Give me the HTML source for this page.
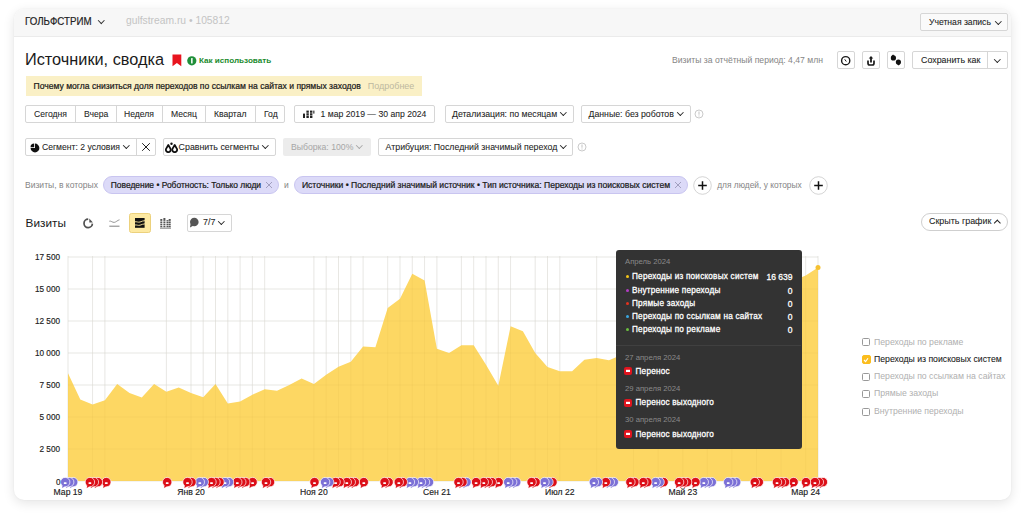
<!DOCTYPE html>
<html><head><meta charset="utf-8">
<style>
*{box-sizing:border-box;margin:0;padding:0}
html,body{width:1024px;height:517px;overflow:hidden;background:#fff}
body{font-family:"Liberation Sans",sans-serif;color:#1f1f1f;position:relative}
.a{position:absolute;white-space:nowrap}
.t{-webkit-text-stroke:0.08px currentColor}
.t2{-webkit-text-stroke:0.22px currentColor}
.card{position:absolute;left:13.5px;top:8.5px;width:997px;height:491.5px;border-radius:10px;background:#fff;
 box-shadow:0 3px 12px rgba(0,0,0,.11),0 0 2px rgba(0,0,0,.05);overflow:hidden}
.hdr{position:absolute;left:0;top:0;width:997px;height:28px;background:#f7f7f7;border-bottom:1px solid #ebebeb}
.btn{position:absolute;border:1px solid #d6d6d6;border-radius:2px;background:#fff;font-size:8.6px;line-height:16px;height:18px;white-space:nowrap;color:#222}
.chev{display:inline-block;width:5px;height:5px;border-right:1px solid #222;border-bottom:1px solid #222;transform:rotate(45deg);position:absolute}
.yl{position:absolute;left:19.5px;width:41px;text-align:right;font-size:8.2px;color:#222;line-height:12px;-webkit-text-stroke:0.15px #222}
.xl{position:absolute;top:485.5px;width:60px;text-align:center;font-size:8.6px;color:#222;line-height:12px;-webkit-text-stroke:0.15px #222}
.tt{position:absolute;left:616px;top:250px;width:186px;height:199px;background:#333333;border-radius:3px;color:#fff}
.tt .r{position:absolute;left:16px;font-size:8.2px;letter-spacing:0.22px;line-height:10px;white-space:nowrap;-webkit-text-stroke:0.28px #fff}
.tt .v{position:absolute;right:9.5px;font-size:8.5px;letter-spacing:0px;line-height:10px;text-align:right;-webkit-text-stroke:0.28px #fff}
.tt .d{position:absolute;left:9px;font-size:7.7px;color:#8a8a8a;line-height:10px;white-space:nowrap}
.dot{position:absolute;left:10px;width:3px;height:3px;border-radius:50%;margin-top:-0.5px}
.lg{position:absolute;left:862px;font-size:8.7px;line-height:11px;color:#b0b0b0;white-space:nowrap}
.lg i{position:absolute;left:0;top:1.5px;width:8px;height:8px;border:1px solid #999;border-radius:1.5px}
.lg span{position:absolute;left:12px;top:0}
</style></head><body>
<div class="card">
 <div class="hdr"></div>
</div>

<!-- header -->
<div class="a" style="left:25px;top:14.5px;font-size:11px;line-height:13px;color:#222;transform:scaleX(0.885);transform-origin:0 0;-webkit-text-stroke:0.2px #222">ГОЛЬФСТРИМ</div>
<div class="chev" style="left:98.5px;top:17.5px;width:4.5px;height:4.5px;border-width:0 0.9px 0.9px 0;border-color:#333"></div>
<div class="a" style="left:126px;top:15px;font-size:10.3px;line-height:12px;color:#c4c4c4">gulfstream.ru • 105812</div>
<div class="btn" style="left:920px;top:13px;width:88px;height:18px;background:#fafafa">
 <span class="a t" style="left:8px;top:0px;font-size:8.6px">Учетная запись</span>
 <i class="chev" style="left:75px;top:5.3px;width:4.6px;height:4.6px"></i>
</div>

<!-- title -->
<div class="a" style="left:25px;top:49px;font-size:16.3px;line-height:20px;color:#1a1a1a">Источники, сводка</div>
<svg class="a" style="left:172px;top:54px" width="10" height="13" viewBox="0 0 10 13"><path d="M0.5,0.5 H9.3 V12.3 L4.9,9 L0.5,12.3 Z" fill="#e8141e"/></svg>
<svg class="a" style="left:187px;top:56px" width="10" height="10" viewBox="0 0 10 10"><circle cx="4.8" cy="4.8" r="4.6" fill="#1f8f3a"/><rect x="4.1" y="2" width="1.5" height="5.6" fill="#fff" rx=".5"/></svg>
<div class="a" style="left:199px;top:55px;font-size:8.1px;line-height:11px;color:#198a2c;font-weight:bold">Как использовать</div>

<!-- banner -->
<div class="a" style="left:26px;top:76px;width:396px;height:19.5px;background:#faf0c6"></div>
<div class="a t2" style="left:33.6px;top:81px;font-size:8.57px;line-height:11px;color:#1a1a1a">Почему могла снизиться доля переходов по ссылкам на сайтах и прямых заходов</div>
<div class="a" style="left:367.8px;top:81px;font-size:8.97px;line-height:11px;color:#bdb8a0">Подробнее</div>

<!-- right toolbar -->
<div class="a" style="left:672px;top:55px;font-size:8.6px;line-height:11px;color:#858585">Визиты за отчётный период: 4,47 млн</div>
<div class="btn" style="left:837px;top:51px;width:18px;height:18px"></div>
<svg class="a" style="left:840px;top:55px" width="12" height="12" viewBox="0 0 12 12"><circle cx="5.7" cy="5.7" r="4.1" fill="none" stroke="#1a1a1a" stroke-width="1.4"/><path d="M4.7,4.3 L6.3,6.5" stroke="#1a1a1a" stroke-width="1"/></svg>
<div class="btn" style="left:862px;top:51px;width:18px;height:18px"></div>
<svg class="a" style="left:865px;top:55px" width="12" height="12" viewBox="0 0 12 12"><path d="M6,0.9 L3.7,3.5 H5.1 V7.4 H6.9 V3.5 H8.3 Z" fill="#1a1a1a"/><path d="M3,5.6 V8.3 Q3,10 4.7,10 H7.3 Q9,10 9,8.3 V5.6" fill="none" stroke="#1a1a1a" stroke-width="1.7"/></svg>
<div class="btn" style="left:887px;top:51px;width:18px;height:18px"></div>
<svg class="a" style="left:889px;top:53px" width="14" height="14" viewBox="0 0 14 14"><circle cx="4.4" cy="4.9" r="2.6" fill="#111"/><path d="M2.2,3.6 L4,1.6 L5.4,2.6Z" fill="#111"/><circle cx="9.4" cy="9" r="2.6" fill="#111"/><path d="M8,11.2 L9.8,12.6 L11.4,10.6Z" fill="#111"/></svg>
<div class="btn" style="left:912px;top:51px;width:96px;height:18px">
 <span class="a t" style="left:8px;top:0px;font-size:8.87px">Сохранить как</span>
 <span class="a" style="left:74px;top:0;width:1px;height:16px;background:#d6d6d6"></span>
 <i class="chev" style="left:82px;top:5.3px;width:4.6px;height:4.6px"></i>
</div>

<!-- row 1 -->
<div class="btn" style="left:25px;top:105px;width:260px;height:18px"></div>
<div class="a" style="left:75px;top:106px;width:1px;height:16px;background:#d6d6d6"></div>
<div class="a" style="left:116px;top:106px;width:1px;height:16px;background:#d6d6d6"></div>
<div class="a" style="left:162px;top:106px;width:1px;height:16px;background:#d6d6d6"></div>
<div class="a" style="left:205px;top:106px;width:1px;height:16px;background:#d6d6d6"></div>
<div class="a" style="left:255px;top:106px;width:1px;height:16px;background:#d6d6d6"></div>
<div class="a t" style="left:34px;top:109px;font-size:8.6px;line-height:11px">Сегодня</div>
<div class="a t" style="left:84px;top:109px;font-size:8.6px;line-height:11px">Вчера</div>
<div class="a t" style="left:124px;top:109px;font-size:8.6px;line-height:11px">Неделя</div>
<div class="a t" style="left:171px;top:109px;font-size:8.6px;line-height:11px">Месяц</div>
<div class="a t" style="left:214px;top:109px;font-size:8.6px;line-height:11px">Квартал</div>
<div class="a t" style="left:264px;top:109px;font-size:8.6px;line-height:11px">Год</div>

<div class="btn" style="left:294px;top:105px;width:141px;height:18px"></div>
<svg class="a" style="left:302px;top:110px" width="13" height="9" viewBox="0 0 13 9"><g fill="#222"><rect x="1" y="3.6" width="2" height="4.4"/><rect x="4.4" y="0.6" width="2.4" height="7.4"/><rect x="8" y="0.6" width="2.4" height="7.4"/><rect x="11.3" y="0.6" width="1.1" height="3"/></g><g stroke="#fff" stroke-width="0.5"><path d="M4,3 H11 M4,5.4 H11"/></g></svg>
<div class="a t" style="left:320.5px;top:109px;font-size:8.66px;line-height:11px">1 мар 2019 — 30 апр 2024</div>

<div class="btn" style="left:445px;top:105px;width:129px;height:18px"></div>
<div class="a t" style="left:452px;top:109px;font-size:8.73px;line-height:11px">Детализация: по месяцам</div>
<i class="chev" style="left:561px;top:110.3px;width:4.6px;height:4.6px"></i>

<div class="btn" style="left:581px;top:105px;width:110px;height:18px"></div>
<div class="a t" style="left:588.5px;top:109px;font-size:8.75px;line-height:11px">Данные: без роботов</div>
<i class="chev" style="left:678px;top:110.3px;width:4.6px;height:4.6px"></i>
<svg class="a" style="left:694px;top:109px" width="10" height="10" viewBox="0 0 10 10"><circle cx="5" cy="5" r="4" fill="none" stroke="#c4c4c4" stroke-width="0.9"/><rect x="4.5" y="2.5" width="1" height="3.2" fill="#c4c4c4"/><rect x="4.5" y="6.5" width="1" height="1" fill="#c4c4c4"/></svg>

<!-- row 2 -->
<div class="btn" style="left:25px;top:138px;width:131px;height:18px"></div>
<div class="a" style="left:136px;top:139px;width:1px;height:16px;background:#d6d6d6"></div>
<svg class="a" style="left:30px;top:143px" width="10" height="10" viewBox="0 0 10 10"><path d="M5,5 V0.6 A4.4,4.4 0 1 1 0.6,5 Z" fill="#111"/><path d="M4.2,4.2 H0.5 A3.8,3.8 0 0 1 4.2,0.5 Z" fill="#111"/></svg>
<div class="a t" style="left:42px;top:141.8px;font-size:8.61px;line-height:11px">Сегмент: 2 условия</div>
<i class="chev" style="left:124px;top:143.3px;width:4.6px;height:4.6px"></i>
<svg class="a" style="left:141px;top:142px" width="10" height="10" viewBox="0 0 10 10"><path d="M1.2,1.2 L8.8,8.8 M8.8,1.2 L1.2,8.8" stroke="#222" stroke-width="1"/></svg>

<div class="btn" style="left:163px;top:138px;width:113px;height:18px"></div>
<svg class="a" style="left:165px;top:141.5px" width="13" height="11" viewBox="0 0 13 11"><g fill="#fff" stroke="#111" stroke-width="1.8" stroke-linejoin="round"><path d="M3.3,3 L1.2,6.6 A2.4,2.4 0 1 0 5.4,6.6 Z"/><path d="M9.7,3 L7.6,6.6 A2.4,2.4 0 1 0 11.8,6.6 Z"/></g><circle cx="6.5" cy="1.8" r="1.2" fill="#111"/></svg>
<div class="a t" style="left:178.6px;top:141.8px;font-size:8.84px;line-height:11px">Сравнить сегменты</div>
<i class="chev" style="left:263px;top:143.3px;width:4.6px;height:4.6px"></i>

<div class="a" style="left:282.5px;top:138px;width:88px;height:18px;background:#ececec;border-radius:2px"></div>
<div class="a" style="left:291px;top:141.8px;font-size:8.67px;line-height:11px;color:#a6a6a6">Выборка: 100%</div>
<i class="chev" style="left:357px;top:143.3px;width:4.6px;height:4.6px;border-color:#a6a6a6"></i>

<div class="btn" style="left:377.5px;top:138px;width:195px;height:18px"></div>
<div class="a t" style="left:385.6px;top:141.8px;font-size:8.78px;line-height:11px">Атрибуция: Последний значимый переход</div>
<i class="chev" style="left:561px;top:143.3px;width:4.6px;height:4.6px"></i>
<svg class="a" style="left:577px;top:142px" width="10" height="10" viewBox="0 0 10 10"><circle cx="5" cy="5" r="4" fill="none" stroke="#c4c4c4" stroke-width="0.9"/><rect x="4.5" y="2.5" width="1" height="3.2" fill="#c4c4c4"/><rect x="4.5" y="6.5" width="1" height="1" fill="#c4c4c4"/></svg>

<!-- row 3 -->
<div class="a" style="left:25px;top:180px;font-size:8.54px;line-height:11px;color:#858585">Визиты, в которых</div>
<div class="a" style="left:102.6px;top:176px;width:176px;height:18px;background:#dcdaf8;border:1px solid #c9c5f0;border-radius:9px"></div>
<div class="a t2" style="left:110.8px;top:180px;font-size:8.43px;line-height:11px;color:#1a1a1a">Поведение • Роботность: Только люди</div>
<svg class="a" style="left:265px;top:181px" width="8" height="8" viewBox="0 0 8 8"><path d="M1,1 L7,7 M7,1 L1,7" stroke="#9a98b8" stroke-width="0.9"/></svg>
<div class="a" style="left:284px;top:180px;font-size:8.5px;line-height:11px;color:#858585">и</div>
<div class="a" style="left:294.2px;top:176px;width:394px;height:18px;background:#dcdaf8;border:1px solid #c9c5f0;border-radius:9px"></div>
<div class="a t2" style="left:301.9px;top:180px;font-size:8.59px;line-height:11px;color:#1a1a1a">Источники • Последний значимый источник • Тип источника: Переходы из поисковых систем</div>
<svg class="a" style="left:674px;top:181px" width="8" height="8" viewBox="0 0 8 8"><path d="M1,1 L7,7 M7,1 L1,7" stroke="#9a98b8" stroke-width="0.9"/></svg>
<svg class="a" style="left:693px;top:176px" width="19" height="19" viewBox="0 0 19 19"><circle cx="9.5" cy="9.5" r="8.8" fill="#fff" stroke="#cfcfcf" stroke-width="0.9"/><path d="M9.5,5.2 V13.8 M5.2,9.5 H13.8" stroke="#111" stroke-width="1.5"/></svg>
<div class="a" style="left:717.2px;top:180px;font-size:8.4px;line-height:11px;color:#858585">для людей, у которых</div>
<svg class="a" style="left:808.5px;top:176px" width="19" height="19" viewBox="0 0 19 19"><circle cx="9.5" cy="9.5" r="8.8" fill="#fff" stroke="#cfcfcf" stroke-width="0.9"/><path d="M9.5,5.2 V13.8 M5.2,9.5 H13.8" stroke="#111" stroke-width="1.5"/></svg>

<!-- row 4 -->
<div class="a" style="left:25.6px;top:216px;font-size:11.8px;line-height:14px;color:#1a1a1a">Визиты</div>
<svg class="a" style="left:83px;top:217.5px" width="11" height="11" viewBox="0 0 11 11"><path d="M5.2,1.2 A4.2,4.2 0 1 0 9.4,5.6" fill="none" stroke="#505050" stroke-width="1.7"/><path d="M6.3,0.6 L9.9,4.4 L6.3,4.6Z" fill="#505050"/></svg>
<svg class="a" style="left:108.5px;top:219px" width="11" height="9" viewBox="0 0 11 9"><path d="M0.3,2.2 C2,1.6 3.5,3.6 5.2,3.4 C7,3.2 8.6,1.2 10.5,0.8" fill="none" stroke="#8a8a8a" stroke-width="0.9"/><path d="M0.3,7.2 H10.5" stroke="#8a8a8a" stroke-width="1.1"/></svg>
<div class="a" style="left:129px;top:212.5px;width:21.5px;height:20px;background:#fde9a2;border:1px solid #ecd17c;border-radius:2.5px"></div>
<svg class="a" style="left:134.5px;top:217.8px" width="10" height="10" viewBox="0 0 10 10"><rect x="0" y="0" width="9.6" height="9.8" fill="#111"/><path d="M-0.5,3.8 C2,3.4 3,4.6 5,4 C6.8,3.5 8,2.6 10.2,2.6" fill="none" stroke="#fde9a2" stroke-width="0.9"/><path d="M-0.5,7 C2,6.6 3,7.8 5,7.2 C6.8,6.7 8,5.8 10.2,5.8" fill="none" stroke="#fde9a2" stroke-width="0.9"/></svg>
<svg class="a" style="left:160px;top:217.5px" width="11" height="11" viewBox="0 0 11 11"><g fill="#555"><rect x="0.3" y="1" width="2" height="8.3"/><rect x="3.4" y="0" width="2" height="9.3"/><rect x="6.5" y="2" width="2" height="7.3"/><rect x="8.7" y="1" width="2" height="8.3"/></g><g stroke="#fff" stroke-width="0.6"><path d="M0,3.3 H11 M0,5.5 H11 M0,7.5 H11"/></g><path d="M0,10.2 H11" stroke="#777" stroke-width="0.9"/></svg>
<div class="btn" style="left:186.5px;top:214px;width:45px;height:18px"></div>
<svg class="a" style="left:189px;top:217px" width="11" height="11" viewBox="0 0 11 11"><circle cx="5.3" cy="5" r="4.3" fill="#555"/><path d="M1.5,7 L1,10.5 L4.5,8.5Z" fill="#555"/></svg>
<div class="a t" style="left:203px;top:217px;font-size:8.9px;line-height:11px">7/7</div>
<i class="chev" style="left:219px;top:219.3px;width:4.6px;height:4.6px"></i>

<div class="a" style="left:921px;top:212.5px;width:87px;height:18px;border:1px solid #cfcfcf;border-radius:9px;background:#fff"></div>
<div class="a t" style="left:929px;top:216px;font-size:8.93px;line-height:11px">Скрыть график</div>
<i class="chev" style="left:995px;top:220.8px;width:4.6px;height:4.6px;transform:rotate(-135deg)"></i>

<!-- chart -->
<svg class="a" style="left:0;top:0" width="1024" height="517" viewBox="0 0 1024 517">
 <g stroke="#e9e9e9" stroke-width="0.8"><line x1="68" y1="481.0" x2="818" y2="481.0" /><line x1="68" y1="449.0" x2="818" y2="449.0" /><line x1="68" y1="417.0" x2="818" y2="417.0" /><line x1="68" y1="385.0" x2="818" y2="385.0" /><line x1="68" y1="353.0" x2="818" y2="353.0" /><line x1="68" y1="321.0" x2="818" y2="321.0" /><line x1="68" y1="289.0" x2="818" y2="289.0" /><line x1="68" y1="257.0" x2="818" y2="257.0" /><line x1="92.6" y1="256" x2="92.6" y2="481" /><line x1="104.9" y1="256" x2="104.9" y2="481" /><line x1="166.4" y1="256" x2="166.4" y2="481" /><line x1="191.0" y1="256" x2="191.0" y2="481" /><line x1="203.2" y1="256" x2="203.2" y2="481" /><line x1="215.5" y1="256" x2="215.5" y2="481" /><line x1="227.8" y1="256" x2="227.8" y2="481" /><line x1="240.1" y1="256" x2="240.1" y2="481" /><line x1="252.4" y1="256" x2="252.4" y2="481" /><line x1="264.7" y1="256" x2="264.7" y2="481" /><line x1="313.9" y1="256" x2="313.9" y2="481" /><line x1="326.2" y1="256" x2="326.2" y2="481" /><line x1="338.5" y1="256" x2="338.5" y2="481" /><line x1="350.8" y1="256" x2="350.8" y2="481" /><line x1="363.1" y1="256" x2="363.1" y2="481" /><line x1="387.7" y1="256" x2="387.7" y2="481" /><line x1="400.0" y1="256" x2="400.0" y2="481" /><line x1="412.3" y1="256" x2="412.3" y2="481" /><line x1="424.6" y1="256" x2="424.6" y2="481" /><line x1="436.9" y1="256" x2="436.9" y2="481" /><line x1="461.4" y1="256" x2="461.4" y2="481" /><line x1="473.7" y1="256" x2="473.7" y2="481" /><line x1="486.0" y1="256" x2="486.0" y2="481" /><line x1="498.3" y1="256" x2="498.3" y2="481" /><line x1="510.6" y1="256" x2="510.6" y2="481" /><line x1="535.2" y1="256" x2="535.2" y2="481" /><line x1="547.5" y1="256" x2="547.5" y2="481" /><line x1="559.8" y1="256" x2="559.8" y2="481" /><line x1="596.7" y1="256" x2="596.7" y2="481" /><line x1="633.6" y1="256" x2="633.6" y2="481" /><line x1="658.2" y1="256" x2="658.2" y2="481" /><line x1="682.8" y1="256" x2="682.8" y2="481" /><line x1="707.3" y1="256" x2="707.3" y2="481" /><line x1="731.9" y1="256" x2="731.9" y2="481" /><line x1="756.5" y1="256" x2="756.5" y2="481" /><line x1="781.1" y1="256" x2="781.1" y2="481" /><line x1="805.7" y1="256" x2="805.7" y2="481" /><line x1="68" y1="256" x2="68" y2="481" /><line x1="818" y1="256" x2="818" y2="481" /></g>
 <path d="M68.0,481.0 L68.0,373.2 80.3,399.6 92.6,404.5 104.9,400.2 117.2,383.9 129.5,393.1 141.8,397.6 154.1,383.9 166.4,391.8 178.7,387.5 191.0,393.1 203.2,397.2 215.5,383.9 227.8,403.5 240.1,401.5 252.4,394.7 264.7,389.3 277.0,390.8 289.3,385.0 301.6,378.6 313.9,384.1 326.2,374.8 338.5,366.7 350.8,361.8 363.1,346.4 375.4,347.2 387.7,308.1 400.0,298.8 412.3,273.8 424.6,280.5 436.9,348.7 449.1,353.0 461.4,345.2 473.7,345.2 486.0,364.7 498.3,385.8 510.6,326.3 522.9,331.3 535.2,353.0 547.5,367.0 559.8,371.3 572.1,371.3 584.4,359.7 596.7,358.0 609.0,360.3 621.3,355.0 633.6,349.7 645.9,344.4 658.2,339.1 670.5,333.8 682.8,328.5 695.0,323.2 707.3,317.9 719.6,312.5 731.9,307.2 744.2,301.9 756.5,296.6 768.8,291.3 781.1,286.0 793.4,280.7 805.7,275.4 818.0,267.5 L818.0,481.0 Z" fill="#fdd763"/>
 <g stroke="rgba(120,90,0,0.05)" stroke-width="0.8"><line x1="68" y1="481.0" x2="818" y2="481.0" /><line x1="68" y1="449.0" x2="818" y2="449.0" /><line x1="68" y1="417.0" x2="818" y2="417.0" /><line x1="68" y1="385.0" x2="818" y2="385.0" /><line x1="68" y1="353.0" x2="818" y2="353.0" /><line x1="68" y1="321.0" x2="818" y2="321.0" /><line x1="68" y1="289.0" x2="818" y2="289.0" /><line x1="68" y1="257.0" x2="818" y2="257.0" /><line x1="92.6" y1="256" x2="92.6" y2="481" /><line x1="104.9" y1="256" x2="104.9" y2="481" /><line x1="166.4" y1="256" x2="166.4" y2="481" /><line x1="191.0" y1="256" x2="191.0" y2="481" /><line x1="203.2" y1="256" x2="203.2" y2="481" /><line x1="215.5" y1="256" x2="215.5" y2="481" /><line x1="227.8" y1="256" x2="227.8" y2="481" /><line x1="240.1" y1="256" x2="240.1" y2="481" /><line x1="252.4" y1="256" x2="252.4" y2="481" /><line x1="264.7" y1="256" x2="264.7" y2="481" /><line x1="313.9" y1="256" x2="313.9" y2="481" /><line x1="326.2" y1="256" x2="326.2" y2="481" /><line x1="338.5" y1="256" x2="338.5" y2="481" /><line x1="350.8" y1="256" x2="350.8" y2="481" /><line x1="363.1" y1="256" x2="363.1" y2="481" /><line x1="387.7" y1="256" x2="387.7" y2="481" /><line x1="400.0" y1="256" x2="400.0" y2="481" /><line x1="412.3" y1="256" x2="412.3" y2="481" /><line x1="424.6" y1="256" x2="424.6" y2="481" /><line x1="436.9" y1="256" x2="436.9" y2="481" /><line x1="461.4" y1="256" x2="461.4" y2="481" /><line x1="473.7" y1="256" x2="473.7" y2="481" /><line x1="486.0" y1="256" x2="486.0" y2="481" /><line x1="498.3" y1="256" x2="498.3" y2="481" /><line x1="510.6" y1="256" x2="510.6" y2="481" /><line x1="535.2" y1="256" x2="535.2" y2="481" /><line x1="547.5" y1="256" x2="547.5" y2="481" /><line x1="559.8" y1="256" x2="559.8" y2="481" /><line x1="596.7" y1="256" x2="596.7" y2="481" /><line x1="633.6" y1="256" x2="633.6" y2="481" /><line x1="658.2" y1="256" x2="658.2" y2="481" /><line x1="682.8" y1="256" x2="682.8" y2="481" /><line x1="707.3" y1="256" x2="707.3" y2="481" /><line x1="731.9" y1="256" x2="731.9" y2="481" /><line x1="756.5" y1="256" x2="756.5" y2="481" /><line x1="781.1" y1="256" x2="781.1" y2="481" /><line x1="805.7" y1="256" x2="805.7" y2="481" /><line x1="68" y1="256" x2="68" y2="481" /><line x1="818" y1="256" x2="818" y2="481" /></g>
 <circle cx="818.0" cy="267.5" r="2.5" fill="#f5c132"/>
 <path d="M820.3,484.9 L819.5,488.3 L823.1,486.3 Z" fill="#dc0f18" stroke="#fff" stroke-width="0.6"/><circle cx="822.9" cy="482.1" r="4.7" fill="#dc0f18" stroke="#fff" stroke-width="0.7"/><path d="M820.6,484.7 L819.9,487.7 L822.9,485.9 Z" fill="#dc0f18"/><path d="M816.3,484.9 L815.5,488.3 L819.1,486.3 Z" fill="#dc0f18" stroke="#fff" stroke-width="0.6"/><circle cx="818.9" cy="482.1" r="4.7" fill="#dc0f18" stroke="#fff" stroke-width="0.7"/><path d="M816.6,484.7 L815.9,487.7 L818.9,485.9 Z" fill="#dc0f18"/><path d="M812.3,484.9 L811.5,488.3 L815.1,486.3 Z" fill="#dc0f18" stroke="#fff" stroke-width="0.6"/><circle cx="814.9" cy="482.1" r="4.7" fill="#dc0f18" stroke="#fff" stroke-width="0.7"/><path d="M812.6,484.7 L811.9,487.7 L814.9,485.9 Z" fill="#dc0f18"/><rect x="813.5" y="482.3" width="2.8" height="1.7" rx="0.4" fill="#fff"/><path d="M803.4,484.9 L802.6,488.3 L806.2,486.3 Z" fill="#dc0f18" stroke="#fff" stroke-width="0.6"/><circle cx="806.0" cy="482.1" r="4.7" fill="#dc0f18" stroke="#fff" stroke-width="0.7"/><path d="M803.7,484.7 L803.0,487.7 L806.0,485.9 Z" fill="#dc0f18"/><rect x="804.6" y="482.3" width="2.8" height="1.7" rx="0.4" fill="#fff"/><path d="M791.0,484.9 L790.2,488.3 L793.8,486.3 Z" fill="#dc0f18" stroke="#fff" stroke-width="0.6"/><circle cx="793.6" cy="482.1" r="4.7" fill="#dc0f18" stroke="#fff" stroke-width="0.7"/><path d="M791.3,484.7 L790.6,487.7 L793.6,485.9 Z" fill="#dc0f18"/><rect x="792.2" y="482.3" width="2.8" height="1.7" rx="0.4" fill="#fff"/><path d="M782.4,484.9 L781.6,488.3 L785.2,486.3 Z" fill="#dc0f18" stroke="#fff" stroke-width="0.6"/><circle cx="785.0" cy="482.1" r="4.7" fill="#dc0f18" stroke="#fff" stroke-width="0.7"/><path d="M782.7,484.7 L782.0,487.7 L785.0,485.9 Z" fill="#dc0f18"/><path d="M778.4,484.9 L777.6,488.3 L781.2,486.3 Z" fill="#dc0f18" stroke="#fff" stroke-width="0.6"/><circle cx="781.0" cy="482.1" r="4.7" fill="#dc0f18" stroke="#fff" stroke-width="0.7"/><path d="M778.7,484.7 L778.0,487.7 L781.0,485.9 Z" fill="#dc0f18"/><path d="M774.4,484.9 L773.6,488.3 L777.2,486.3 Z" fill="#dc0f18" stroke="#fff" stroke-width="0.6"/><circle cx="777.0" cy="482.1" r="4.7" fill="#dc0f18" stroke="#fff" stroke-width="0.7"/><path d="M774.7,484.7 L774.0,487.7 L777.0,485.9 Z" fill="#dc0f18"/><rect x="775.6" y="482.3" width="2.8" height="1.7" rx="0.4" fill="#fff"/><path d="M756.2,484.9 L755.4,488.3 L759.0,486.3 Z" fill="#dc0f18" stroke="#fff" stroke-width="0.6"/><circle cx="758.8" cy="482.1" r="4.7" fill="#dc0f18" stroke="#fff" stroke-width="0.7"/><path d="M756.5,484.7 L755.8,487.7 L758.8,485.9 Z" fill="#dc0f18"/><path d="M752.2,484.9 L751.4,488.3 L755.0,486.3 Z" fill="#dc0f18" stroke="#fff" stroke-width="0.6"/><circle cx="754.8" cy="482.1" r="4.7" fill="#dc0f18" stroke="#fff" stroke-width="0.7"/><path d="M752.5,484.7 L751.8,487.7 L754.8,485.9 Z" fill="#dc0f18"/><rect x="753.4" y="482.3" width="2.8" height="1.7" rx="0.4" fill="#fff"/><path d="M733.6,484.9 L732.8,488.3 L736.4,486.3 Z" fill="#7b70d6" stroke="#fff" stroke-width="0.6"/><circle cx="736.2" cy="482.1" r="4.7" fill="#7b70d6" stroke="#fff" stroke-width="0.7"/><path d="M733.9,484.7 L733.2,487.7 L736.2,485.9 Z" fill="#7b70d6"/><path d="M729.6,484.9 L728.8,488.3 L732.4,486.3 Z" fill="#7b70d6" stroke="#fff" stroke-width="0.6"/><circle cx="732.2" cy="482.1" r="4.7" fill="#7b70d6" stroke="#fff" stroke-width="0.7"/><path d="M729.9,484.7 L729.2,487.7 L732.2,485.9 Z" fill="#7b70d6"/><path d="M725.6,484.9 L724.8,488.3 L728.4,486.3 Z" fill="#7b70d6" stroke="#fff" stroke-width="0.6"/><circle cx="728.2" cy="482.1" r="4.7" fill="#7b70d6" stroke="#fff" stroke-width="0.7"/><path d="M725.9,484.7 L725.2,487.7 L728.2,485.9 Z" fill="#7b70d6"/><rect x="726.8" y="482.3" width="2.8" height="1.7" rx="0.4" fill="#fff"/><path d="M709.2,484.9 L708.4,488.3 L712.0,486.3 Z" fill="#7b70d6" stroke="#fff" stroke-width="0.6"/><circle cx="711.8" cy="482.1" r="4.7" fill="#7b70d6" stroke="#fff" stroke-width="0.7"/><path d="M709.5,484.7 L708.8,487.7 L711.8,485.9 Z" fill="#7b70d6"/><path d="M705.2,484.9 L704.4,488.3 L708.0,486.3 Z" fill="#7b70d6" stroke="#fff" stroke-width="0.6"/><circle cx="707.8" cy="482.1" r="4.7" fill="#7b70d6" stroke="#fff" stroke-width="0.7"/><path d="M705.5,484.7 L704.8,487.7 L707.8,485.9 Z" fill="#7b70d6"/><path d="M701.2,484.9 L700.4,488.3 L704.0,486.3 Z" fill="#7b70d6" stroke="#fff" stroke-width="0.6"/><circle cx="703.8" cy="482.1" r="4.7" fill="#7b70d6" stroke="#fff" stroke-width="0.7"/><path d="M701.5,484.7 L700.8,487.7 L703.8,485.9 Z" fill="#7b70d6"/><rect x="702.4" y="482.3" width="2.8" height="1.7" rx="0.4" fill="#fff"/><path d="M692.9,484.9 L692.1,488.3 L695.7,486.3 Z" fill="#dc0f18" stroke="#fff" stroke-width="0.6"/><circle cx="695.5" cy="482.1" r="4.7" fill="#dc0f18" stroke="#fff" stroke-width="0.7"/><path d="M693.2,484.7 L692.5,487.7 L695.5,485.9 Z" fill="#dc0f18"/><rect x="694.1" y="482.3" width="2.8" height="1.7" rx="0.4" fill="#fff"/><path d="M684.5,484.9 L683.7,488.3 L687.3,486.3 Z" fill="#dc0f18" stroke="#fff" stroke-width="0.6"/><circle cx="687.1" cy="482.1" r="4.7" fill="#dc0f18" stroke="#fff" stroke-width="0.7"/><path d="M684.8,484.7 L684.1,487.7 L687.1,485.9 Z" fill="#dc0f18"/><path d="M680.5,484.9 L679.7,488.3 L683.3,486.3 Z" fill="#dc0f18" stroke="#fff" stroke-width="0.6"/><circle cx="683.1" cy="482.1" r="4.7" fill="#dc0f18" stroke="#fff" stroke-width="0.7"/><path d="M680.8,484.7 L680.1,487.7 L683.1,485.9 Z" fill="#dc0f18"/><path d="M676.5,484.9 L675.7,488.3 L679.3,486.3 Z" fill="#dc0f18" stroke="#fff" stroke-width="0.6"/><circle cx="679.1" cy="482.1" r="4.7" fill="#dc0f18" stroke="#fff" stroke-width="0.7"/><path d="M676.8,484.7 L676.1,487.7 L679.1,485.9 Z" fill="#dc0f18"/><rect x="677.7" y="482.3" width="2.8" height="1.7" rx="0.4" fill="#fff"/><path d="M661.0,484.9 L660.2,488.3 L663.8,486.3 Z" fill="#dc0f18" stroke="#fff" stroke-width="0.6"/><circle cx="663.6" cy="482.1" r="4.7" fill="#dc0f18" stroke="#fff" stroke-width="0.7"/><path d="M661.3,484.7 L660.6,487.7 L663.6,485.9 Z" fill="#dc0f18"/><path d="M657.0,484.9 L656.2,488.3 L659.8,486.3 Z" fill="#7b70d6" stroke="#fff" stroke-width="0.6"/><circle cx="659.6" cy="482.1" r="4.7" fill="#7b70d6" stroke="#fff" stroke-width="0.7"/><path d="M657.3,484.7 L656.6,487.7 L659.6,485.9 Z" fill="#7b70d6"/><path d="M653.0,484.9 L652.2,488.3 L655.8,486.3 Z" fill="#7b70d6" stroke="#fff" stroke-width="0.6"/><circle cx="655.6" cy="482.1" r="4.7" fill="#7b70d6" stroke="#fff" stroke-width="0.7"/><path d="M653.3,484.7 L652.6,487.7 L655.6,485.9 Z" fill="#7b70d6"/><rect x="654.2" y="482.3" width="2.8" height="1.7" rx="0.4" fill="#fff"/><path d="M644.7,484.9 L643.9,488.3 L647.5,486.3 Z" fill="#dc0f18" stroke="#fff" stroke-width="0.6"/><circle cx="647.3" cy="482.1" r="4.7" fill="#dc0f18" stroke="#fff" stroke-width="0.7"/><path d="M645.0,484.7 L644.3,487.7 L647.3,485.9 Z" fill="#dc0f18"/><path d="M640.7,484.9 L639.9,488.3 L643.5,486.3 Z" fill="#dc0f18" stroke="#fff" stroke-width="0.6"/><circle cx="643.3" cy="482.1" r="4.7" fill="#dc0f18" stroke="#fff" stroke-width="0.7"/><path d="M641.0,484.7 L640.3,487.7 L643.3,485.9 Z" fill="#dc0f18"/><rect x="641.9" y="482.3" width="2.8" height="1.7" rx="0.4" fill="#fff"/><path d="M631.8,484.9 L631.0,488.3 L634.6,486.3 Z" fill="#dc0f18" stroke="#fff" stroke-width="0.6"/><circle cx="634.4" cy="482.1" r="4.7" fill="#dc0f18" stroke="#fff" stroke-width="0.7"/><path d="M632.1,484.7 L631.4,487.7 L634.4,485.9 Z" fill="#dc0f18"/><path d="M627.8,484.9 L627.0,488.3 L630.6,486.3 Z" fill="#dc0f18" stroke="#fff" stroke-width="0.6"/><circle cx="630.4" cy="482.1" r="4.7" fill="#dc0f18" stroke="#fff" stroke-width="0.7"/><path d="M628.1,484.7 L627.4,487.7 L630.4,485.9 Z" fill="#dc0f18"/><rect x="629.0" y="482.3" width="2.8" height="1.7" rx="0.4" fill="#fff"/><path d="M611.2,484.9 L610.4,488.3 L614.0,486.3 Z" fill="#7b70d6" stroke="#fff" stroke-width="0.6"/><circle cx="613.8" cy="482.1" r="4.7" fill="#7b70d6" stroke="#fff" stroke-width="0.7"/><path d="M611.5,484.7 L610.8,487.7 L613.8,485.9 Z" fill="#7b70d6"/><path d="M607.2,484.9 L606.4,488.3 L610.0,486.3 Z" fill="#7b70d6" stroke="#fff" stroke-width="0.6"/><circle cx="609.8" cy="482.1" r="4.7" fill="#7b70d6" stroke="#fff" stroke-width="0.7"/><path d="M607.5,484.7 L606.8,487.7 L609.8,485.9 Z" fill="#7b70d6"/><path d="M603.2,484.9 L602.4,488.3 L606.0,486.3 Z" fill="#dc0f18" stroke="#fff" stroke-width="0.6"/><circle cx="605.8" cy="482.1" r="4.7" fill="#dc0f18" stroke="#fff" stroke-width="0.7"/><path d="M603.5,484.7 L602.8,487.7 L605.8,485.9 Z" fill="#dc0f18"/><rect x="604.4" y="482.3" width="2.8" height="1.7" rx="0.4" fill="#fff"/><path d="M595.3,484.9 L594.5,488.3 L598.1,486.3 Z" fill="#7b70d6" stroke="#fff" stroke-width="0.6"/><circle cx="597.9" cy="482.1" r="4.7" fill="#7b70d6" stroke="#fff" stroke-width="0.7"/><path d="M595.6,484.7 L594.9,487.7 L597.9,485.9 Z" fill="#7b70d6"/><path d="M591.3,484.9 L590.5,488.3 L594.1,486.3 Z" fill="#7b70d6" stroke="#fff" stroke-width="0.6"/><circle cx="593.9" cy="482.1" r="4.7" fill="#7b70d6" stroke="#fff" stroke-width="0.7"/><path d="M591.6,484.7 L590.9,487.7 L593.9,485.9 Z" fill="#7b70d6"/><rect x="592.5" y="482.3" width="2.8" height="1.7" rx="0.4" fill="#fff"/><path d="M549.9,484.9 L549.1,488.3 L552.7,486.3 Z" fill="#dc0f18" stroke="#fff" stroke-width="0.6"/><circle cx="552.5" cy="482.1" r="4.7" fill="#dc0f18" stroke="#fff" stroke-width="0.7"/><path d="M550.2,484.7 L549.5,487.7 L552.5,485.9 Z" fill="#dc0f18"/><path d="M545.9,484.9 L545.1,488.3 L548.7,486.3 Z" fill="#7b70d6" stroke="#fff" stroke-width="0.6"/><circle cx="548.5" cy="482.1" r="4.7" fill="#7b70d6" stroke="#fff" stroke-width="0.7"/><path d="M546.2,484.7 L545.5,487.7 L548.5,485.9 Z" fill="#7b70d6"/><path d="M541.9,484.9 L541.1,488.3 L544.7,486.3 Z" fill="#7b70d6" stroke="#fff" stroke-width="0.6"/><circle cx="544.5" cy="482.1" r="4.7" fill="#7b70d6" stroke="#fff" stroke-width="0.7"/><path d="M542.2,484.7 L541.5,487.7 L544.5,485.9 Z" fill="#7b70d6"/><rect x="543.1" y="482.3" width="2.8" height="1.7" rx="0.4" fill="#fff"/><path d="M533.0,484.9 L532.2,488.3 L535.8,486.3 Z" fill="#dc0f18" stroke="#fff" stroke-width="0.6"/><circle cx="535.6" cy="482.1" r="4.7" fill="#dc0f18" stroke="#fff" stroke-width="0.7"/><path d="M533.3,484.7 L532.6,487.7 L535.6,485.9 Z" fill="#dc0f18"/><path d="M529.0,484.9 L528.2,488.3 L531.8,486.3 Z" fill="#dc0f18" stroke="#fff" stroke-width="0.6"/><circle cx="531.6" cy="482.1" r="4.7" fill="#dc0f18" stroke="#fff" stroke-width="0.7"/><path d="M529.3,484.7 L528.6,487.7 L531.6,485.9 Z" fill="#dc0f18"/><rect x="530.2" y="482.3" width="2.8" height="1.7" rx="0.4" fill="#fff"/><path d="M513.6,484.9 L512.8,488.3 L516.4,486.3 Z" fill="#7b70d6" stroke="#fff" stroke-width="0.6"/><circle cx="516.2" cy="482.1" r="4.7" fill="#7b70d6" stroke="#fff" stroke-width="0.7"/><path d="M513.9,484.7 L513.2,487.7 L516.2,485.9 Z" fill="#7b70d6"/><path d="M509.6,484.9 L508.8,488.3 L512.4,486.3 Z" fill="#7b70d6" stroke="#fff" stroke-width="0.6"/><circle cx="512.2" cy="482.1" r="4.7" fill="#7b70d6" stroke="#fff" stroke-width="0.7"/><path d="M509.9,484.7 L509.2,487.7 L512.2,485.9 Z" fill="#7b70d6"/><path d="M505.6,484.9 L504.8,488.3 L508.4,486.3 Z" fill="#7b70d6" stroke="#fff" stroke-width="0.6"/><circle cx="508.2" cy="482.1" r="4.7" fill="#7b70d6" stroke="#fff" stroke-width="0.7"/><path d="M505.9,484.7 L505.2,487.7 L508.2,485.9 Z" fill="#7b70d6"/><rect x="506.8" y="482.3" width="2.8" height="1.7" rx="0.4" fill="#fff"/><path d="M496.0,484.9 L495.2,488.3 L498.8,486.3 Z" fill="#dc0f18" stroke="#fff" stroke-width="0.6"/><circle cx="498.6" cy="482.1" r="4.7" fill="#dc0f18" stroke="#fff" stroke-width="0.7"/><path d="M496.3,484.7 L495.6,487.7 L498.6,485.9 Z" fill="#dc0f18"/><rect x="497.2" y="482.3" width="2.8" height="1.7" rx="0.4" fill="#fff"/><path d="M489.2,484.9 L488.4,488.3 L492.0,486.3 Z" fill="#dc0f18" stroke="#fff" stroke-width="0.6"/><circle cx="491.8" cy="482.1" r="4.7" fill="#dc0f18" stroke="#fff" stroke-width="0.7"/><path d="M489.5,484.7 L488.8,487.7 L491.8,485.9 Z" fill="#dc0f18"/><path d="M485.2,484.9 L484.4,488.3 L488.0,486.3 Z" fill="#dc0f18" stroke="#fff" stroke-width="0.6"/><circle cx="487.8" cy="482.1" r="4.7" fill="#dc0f18" stroke="#fff" stroke-width="0.7"/><path d="M485.5,484.7 L484.8,487.7 L487.8,485.9 Z" fill="#dc0f18"/><path d="M481.2,484.9 L480.4,488.3 L484.0,486.3 Z" fill="#dc0f18" stroke="#fff" stroke-width="0.6"/><circle cx="483.8" cy="482.1" r="4.7" fill="#dc0f18" stroke="#fff" stroke-width="0.7"/><path d="M481.5,484.7 L480.8,487.7 L483.8,485.9 Z" fill="#dc0f18"/><rect x="482.4" y="482.3" width="2.8" height="1.7" rx="0.4" fill="#fff"/><path d="M473.5,484.9 L472.7,488.3 L476.3,486.3 Z" fill="#dc0f18" stroke="#fff" stroke-width="0.6"/><circle cx="476.1" cy="482.1" r="4.7" fill="#dc0f18" stroke="#fff" stroke-width="0.7"/><path d="M473.8,484.7 L473.1,487.7 L476.1,485.9 Z" fill="#dc0f18"/><rect x="474.7" y="482.3" width="2.8" height="1.7" rx="0.4" fill="#fff"/><path d="M463.9,484.9 L463.1,488.3 L466.7,486.3 Z" fill="#7b70d6" stroke="#fff" stroke-width="0.6"/><circle cx="466.5" cy="482.1" r="4.7" fill="#7b70d6" stroke="#fff" stroke-width="0.7"/><path d="M464.2,484.7 L463.5,487.7 L466.5,485.9 Z" fill="#7b70d6"/><path d="M459.9,484.9 L459.1,488.3 L462.7,486.3 Z" fill="#dc0f18" stroke="#fff" stroke-width="0.6"/><circle cx="462.5" cy="482.1" r="4.7" fill="#dc0f18" stroke="#fff" stroke-width="0.7"/><path d="M460.2,484.7 L459.5,487.7 L462.5,485.9 Z" fill="#dc0f18"/><path d="M455.9,484.9 L455.1,488.3 L458.7,486.3 Z" fill="#dc0f18" stroke="#fff" stroke-width="0.6"/><circle cx="458.5" cy="482.1" r="4.7" fill="#dc0f18" stroke="#fff" stroke-width="0.7"/><path d="M456.2,484.7 L455.5,487.7 L458.5,485.9 Z" fill="#dc0f18"/><rect x="457.1" y="482.3" width="2.8" height="1.7" rx="0.4" fill="#fff"/><path d="M426.4,484.9 L425.6,488.3 L429.2,486.3 Z" fill="#7b70d6" stroke="#fff" stroke-width="0.6"/><circle cx="429.0" cy="482.1" r="4.7" fill="#7b70d6" stroke="#fff" stroke-width="0.7"/><path d="M426.7,484.7 L426.0,487.7 L429.0,485.9 Z" fill="#7b70d6"/><path d="M422.4,484.9 L421.6,488.3 L425.2,486.3 Z" fill="#7b70d6" stroke="#fff" stroke-width="0.6"/><circle cx="425.0" cy="482.1" r="4.7" fill="#7b70d6" stroke="#fff" stroke-width="0.7"/><path d="M422.7,484.7 L422.0,487.7 L425.0,485.9 Z" fill="#7b70d6"/><path d="M418.4,484.9 L417.6,488.3 L421.2,486.3 Z" fill="#7b70d6" stroke="#fff" stroke-width="0.6"/><circle cx="421.0" cy="482.1" r="4.7" fill="#7b70d6" stroke="#fff" stroke-width="0.7"/><path d="M418.7,484.7 L418.0,487.7 L421.0,485.9 Z" fill="#7b70d6"/><rect x="419.6" y="482.3" width="2.8" height="1.7" rx="0.4" fill="#fff"/><path d="M411.3,484.9 L410.5,488.3 L414.1,486.3 Z" fill="#7b70d6" stroke="#fff" stroke-width="0.6"/><circle cx="413.9" cy="482.1" r="4.7" fill="#7b70d6" stroke="#fff" stroke-width="0.7"/><path d="M411.6,484.7 L410.9,487.7 L413.9,485.9 Z" fill="#7b70d6"/><path d="M407.3,484.9 L406.5,488.3 L410.1,486.3 Z" fill="#7b70d6" stroke="#fff" stroke-width="0.6"/><circle cx="409.9" cy="482.1" r="4.7" fill="#7b70d6" stroke="#fff" stroke-width="0.7"/><path d="M407.6,484.7 L406.9,487.7 L409.9,485.9 Z" fill="#7b70d6"/><rect x="408.5" y="482.3" width="2.8" height="1.7" rx="0.4" fill="#fff"/><path d="M400.2,484.9 L399.4,488.3 L403.0,486.3 Z" fill="#dc0f18" stroke="#fff" stroke-width="0.6"/><circle cx="402.8" cy="482.1" r="4.7" fill="#dc0f18" stroke="#fff" stroke-width="0.7"/><path d="M400.5,484.7 L399.8,487.7 L402.8,485.9 Z" fill="#dc0f18"/><path d="M396.2,484.9 L395.4,488.3 L399.0,486.3 Z" fill="#dc0f18" stroke="#fff" stroke-width="0.6"/><circle cx="398.8" cy="482.1" r="4.7" fill="#dc0f18" stroke="#fff" stroke-width="0.7"/><path d="M396.5,484.7 L395.8,487.7 L398.8,485.9 Z" fill="#dc0f18"/><rect x="397.4" y="482.3" width="2.8" height="1.7" rx="0.4" fill="#fff"/><path d="M386.0,484.9 L385.2,488.3 L388.8,486.3 Z" fill="#dc0f18" stroke="#fff" stroke-width="0.6"/><circle cx="388.6" cy="482.1" r="4.7" fill="#dc0f18" stroke="#fff" stroke-width="0.7"/><path d="M386.3,484.7 L385.6,487.7 L388.6,485.9 Z" fill="#dc0f18"/><path d="M382.0,484.9 L381.2,488.3 L384.8,486.3 Z" fill="#dc0f18" stroke="#fff" stroke-width="0.6"/><circle cx="384.6" cy="482.1" r="4.7" fill="#dc0f18" stroke="#fff" stroke-width="0.7"/><path d="M382.3,484.7 L381.6,487.7 L384.6,485.9 Z" fill="#dc0f18"/><rect x="383.2" y="482.3" width="2.8" height="1.7" rx="0.4" fill="#fff"/><path d="M361.2,484.9 L360.4,488.3 L364.0,486.3 Z" fill="#dc0f18" stroke="#fff" stroke-width="0.6"/><circle cx="363.8" cy="482.1" r="4.7" fill="#dc0f18" stroke="#fff" stroke-width="0.7"/><path d="M361.5,484.7 L360.8,487.7 L363.8,485.9 Z" fill="#dc0f18"/><rect x="362.4" y="482.3" width="2.8" height="1.7" rx="0.4" fill="#fff"/><path d="M352.2,484.9 L351.4,488.3 L355.0,486.3 Z" fill="#dc0f18" stroke="#fff" stroke-width="0.6"/><circle cx="354.8" cy="482.1" r="4.7" fill="#dc0f18" stroke="#fff" stroke-width="0.7"/><path d="M352.5,484.7 L351.8,487.7 L354.8,485.9 Z" fill="#dc0f18"/><path d="M348.2,484.9 L347.4,488.3 L351.0,486.3 Z" fill="#dc0f18" stroke="#fff" stroke-width="0.6"/><circle cx="350.8" cy="482.1" r="4.7" fill="#dc0f18" stroke="#fff" stroke-width="0.7"/><path d="M348.5,484.7 L347.8,487.7 L350.8,485.9 Z" fill="#dc0f18"/><path d="M344.2,484.9 L343.4,488.3 L347.0,486.3 Z" fill="#dc0f18" stroke="#fff" stroke-width="0.6"/><circle cx="346.8" cy="482.1" r="4.7" fill="#dc0f18" stroke="#fff" stroke-width="0.7"/><path d="M344.5,484.7 L343.8,487.7 L346.8,485.9 Z" fill="#dc0f18"/><rect x="345.4" y="482.3" width="2.8" height="1.7" rx="0.4" fill="#fff"/><path d="M337.0,484.9 L336.2,488.3 L339.8,486.3 Z" fill="#dc0f18" stroke="#fff" stroke-width="0.6"/><circle cx="339.6" cy="482.1" r="4.7" fill="#dc0f18" stroke="#fff" stroke-width="0.7"/><path d="M337.3,484.7 L336.6,487.7 L339.6,485.9 Z" fill="#dc0f18"/><path d="M333.0,484.9 L332.2,488.3 L335.8,486.3 Z" fill="#dc0f18" stroke="#fff" stroke-width="0.6"/><circle cx="335.6" cy="482.1" r="4.7" fill="#dc0f18" stroke="#fff" stroke-width="0.7"/><path d="M333.3,484.7 L332.6,487.7 L335.6,485.9 Z" fill="#dc0f18"/><rect x="334.2" y="482.3" width="2.8" height="1.7" rx="0.4" fill="#fff"/><path d="M326.5,484.9 L325.7,488.3 L329.3,486.3 Z" fill="#7b70d6" stroke="#fff" stroke-width="0.6"/><circle cx="329.1" cy="482.1" r="4.7" fill="#7b70d6" stroke="#fff" stroke-width="0.7"/><path d="M326.8,484.7 L326.1,487.7 L329.1,485.9 Z" fill="#7b70d6"/><path d="M322.5,484.9 L321.7,488.3 L325.3,486.3 Z" fill="#7b70d6" stroke="#fff" stroke-width="0.6"/><circle cx="325.1" cy="482.1" r="4.7" fill="#7b70d6" stroke="#fff" stroke-width="0.7"/><path d="M322.8,484.7 L322.1,487.7 L325.1,485.9 Z" fill="#7b70d6"/><rect x="323.7" y="482.3" width="2.8" height="1.7" rx="0.4" fill="#fff"/><path d="M311.9,484.9 L311.1,488.3 L314.7,486.3 Z" fill="#dc0f18" stroke="#fff" stroke-width="0.6"/><circle cx="314.5" cy="482.1" r="4.7" fill="#dc0f18" stroke="#fff" stroke-width="0.7"/><path d="M312.2,484.7 L311.5,487.7 L314.5,485.9 Z" fill="#dc0f18"/><rect x="313.1" y="482.3" width="2.8" height="1.7" rx="0.4" fill="#fff"/><path d="M267.4,484.9 L266.6,488.3 L270.2,486.3 Z" fill="#dc0f18" stroke="#fff" stroke-width="0.6"/><circle cx="270.0" cy="482.1" r="4.7" fill="#dc0f18" stroke="#fff" stroke-width="0.7"/><path d="M267.7,484.7 L267.0,487.7 L270.0,485.9 Z" fill="#dc0f18"/><path d="M263.4,484.9 L262.6,488.3 L266.2,486.3 Z" fill="#dc0f18" stroke="#fff" stroke-width="0.6"/><circle cx="266.0" cy="482.1" r="4.7" fill="#dc0f18" stroke="#fff" stroke-width="0.7"/><path d="M263.7,484.7 L263.0,487.7 L266.0,485.9 Z" fill="#dc0f18"/><rect x="264.6" y="482.3" width="2.8" height="1.7" rx="0.4" fill="#fff"/><path d="M250.0,484.9 L249.2,488.3 L252.8,486.3 Z" fill="#dc0f18" stroke="#fff" stroke-width="0.6"/><circle cx="252.6" cy="482.1" r="4.7" fill="#dc0f18" stroke="#fff" stroke-width="0.7"/><path d="M250.3,484.7 L249.6,487.7 L252.6,485.9 Z" fill="#dc0f18"/><rect x="251.2" y="482.3" width="2.8" height="1.7" rx="0.4" fill="#fff"/><path d="M242.7,484.9 L241.9,488.3 L245.5,486.3 Z" fill="#dc0f18" stroke="#fff" stroke-width="0.6"/><circle cx="245.3" cy="482.1" r="4.7" fill="#dc0f18" stroke="#fff" stroke-width="0.7"/><path d="M243.0,484.7 L242.3,487.7 L245.3,485.9 Z" fill="#dc0f18"/><path d="M238.7,484.9 L237.9,488.3 L241.5,486.3 Z" fill="#dc0f18" stroke="#fff" stroke-width="0.6"/><circle cx="241.3" cy="482.1" r="4.7" fill="#dc0f18" stroke="#fff" stroke-width="0.7"/><path d="M239.0,484.7 L238.3,487.7 L241.3,485.9 Z" fill="#dc0f18"/><path d="M234.7,484.9 L233.9,488.3 L237.5,486.3 Z" fill="#dc0f18" stroke="#fff" stroke-width="0.6"/><circle cx="237.3" cy="482.1" r="4.7" fill="#dc0f18" stroke="#fff" stroke-width="0.7"/><path d="M235.0,484.7 L234.3,487.7 L237.3,485.9 Z" fill="#dc0f18"/><rect x="235.9" y="482.3" width="2.8" height="1.7" rx="0.4" fill="#fff"/><path d="M226.4,484.9 L225.6,488.3 L229.2,486.3 Z" fill="#7b70d6" stroke="#fff" stroke-width="0.6"/><circle cx="229.0" cy="482.1" r="4.7" fill="#7b70d6" stroke="#fff" stroke-width="0.7"/><path d="M226.7,484.7 L226.0,487.7 L229.0,485.9 Z" fill="#7b70d6"/><path d="M222.4,484.9 L221.6,488.3 L225.2,486.3 Z" fill="#7b70d6" stroke="#fff" stroke-width="0.6"/><circle cx="225.0" cy="482.1" r="4.7" fill="#7b70d6" stroke="#fff" stroke-width="0.7"/><path d="M222.7,484.7 L222.0,487.7 L225.0,485.9 Z" fill="#7b70d6"/><rect x="223.6" y="482.3" width="2.8" height="1.7" rx="0.4" fill="#fff"/><path d="M216.9,484.9 L216.1,488.3 L219.7,486.3 Z" fill="#dc0f18" stroke="#fff" stroke-width="0.6"/><circle cx="219.5" cy="482.1" r="4.7" fill="#dc0f18" stroke="#fff" stroke-width="0.7"/><path d="M217.2,484.7 L216.5,487.7 L219.5,485.9 Z" fill="#dc0f18"/><path d="M212.9,484.9 L212.1,488.3 L215.7,486.3 Z" fill="#dc0f18" stroke="#fff" stroke-width="0.6"/><circle cx="215.5" cy="482.1" r="4.7" fill="#dc0f18" stroke="#fff" stroke-width="0.7"/><path d="M213.2,484.7 L212.5,487.7 L215.5,485.9 Z" fill="#dc0f18"/><path d="M208.9,484.9 L208.1,488.3 L211.7,486.3 Z" fill="#dc0f18" stroke="#fff" stroke-width="0.6"/><circle cx="211.5" cy="482.1" r="4.7" fill="#dc0f18" stroke="#fff" stroke-width="0.7"/><path d="M209.2,484.7 L208.5,487.7 L211.5,485.9 Z" fill="#dc0f18"/><rect x="210.1" y="482.3" width="2.8" height="1.7" rx="0.4" fill="#fff"/><path d="M201.2,484.9 L200.4,488.3 L204.0,486.3 Z" fill="#7b70d6" stroke="#fff" stroke-width="0.6"/><circle cx="203.8" cy="482.1" r="4.7" fill="#7b70d6" stroke="#fff" stroke-width="0.7"/><path d="M201.5,484.7 L200.8,487.7 L203.8,485.9 Z" fill="#7b70d6"/><path d="M197.2,484.9 L196.4,488.3 L200.0,486.3 Z" fill="#7b70d6" stroke="#fff" stroke-width="0.6"/><circle cx="199.8" cy="482.1" r="4.7" fill="#7b70d6" stroke="#fff" stroke-width="0.7"/><path d="M197.5,484.7 L196.8,487.7 L199.8,485.9 Z" fill="#7b70d6"/><rect x="198.4" y="482.3" width="2.8" height="1.7" rx="0.4" fill="#fff"/><path d="M188.9,484.9 L188.1,488.3 L191.7,486.3 Z" fill="#dc0f18" stroke="#fff" stroke-width="0.6"/><circle cx="191.5" cy="482.1" r="4.7" fill="#dc0f18" stroke="#fff" stroke-width="0.7"/><path d="M189.2,484.7 L188.5,487.7 L191.5,485.9 Z" fill="#dc0f18"/><path d="M184.9,484.9 L184.1,488.3 L187.7,486.3 Z" fill="#dc0f18" stroke="#fff" stroke-width="0.6"/><circle cx="187.5" cy="482.1" r="4.7" fill="#dc0f18" stroke="#fff" stroke-width="0.7"/><path d="M185.2,484.7 L184.5,487.7 L187.5,485.9 Z" fill="#dc0f18"/><rect x="186.1" y="482.3" width="2.8" height="1.7" rx="0.4" fill="#fff"/><path d="M164.6,484.9 L163.8,488.3 L167.4,486.3 Z" fill="#dc0f18" stroke="#fff" stroke-width="0.6"/><circle cx="167.2" cy="482.1" r="4.7" fill="#dc0f18" stroke="#fff" stroke-width="0.7"/><path d="M164.9,484.7 L164.2,487.7 L167.2,485.9 Z" fill="#dc0f18"/><rect x="165.8" y="482.3" width="2.8" height="1.7" rx="0.4" fill="#fff"/><path d="M103.7,484.9 L102.9,488.3 L106.5,486.3 Z" fill="#dc0f18" stroke="#fff" stroke-width="0.6"/><circle cx="106.3" cy="482.1" r="4.7" fill="#dc0f18" stroke="#fff" stroke-width="0.7"/><path d="M104.0,484.7 L103.3,487.7 L106.3,485.9 Z" fill="#dc0f18"/><rect x="104.9" y="482.3" width="2.8" height="1.7" rx="0.4" fill="#fff"/><path d="M95.3,484.9 L94.5,488.3 L98.1,486.3 Z" fill="#dc0f18" stroke="#fff" stroke-width="0.6"/><circle cx="97.9" cy="482.1" r="4.7" fill="#dc0f18" stroke="#fff" stroke-width="0.7"/><path d="M95.6,484.7 L94.9,487.7 L97.9,485.9 Z" fill="#dc0f18"/><path d="M91.3,484.9 L90.5,488.3 L94.1,486.3 Z" fill="#dc0f18" stroke="#fff" stroke-width="0.6"/><circle cx="93.9" cy="482.1" r="4.7" fill="#dc0f18" stroke="#fff" stroke-width="0.7"/><path d="M91.6,484.7 L90.9,487.7 L93.9,485.9 Z" fill="#dc0f18"/><path d="M87.3,484.9 L86.5,488.3 L90.1,486.3 Z" fill="#dc0f18" stroke="#fff" stroke-width="0.6"/><circle cx="89.9" cy="482.1" r="4.7" fill="#dc0f18" stroke="#fff" stroke-width="0.7"/><path d="M87.6,484.7 L86.9,487.7 L89.9,485.9 Z" fill="#dc0f18"/><rect x="88.5" y="482.3" width="2.8" height="1.7" rx="0.4" fill="#fff"/><path d="M70.6,484.9 L69.8,488.3 L73.4,486.3 Z" fill="#7b70d6" stroke="#fff" stroke-width="0.6"/><circle cx="73.2" cy="482.1" r="4.7" fill="#7b70d6" stroke="#fff" stroke-width="0.7"/><path d="M70.9,484.7 L70.2,487.7 L73.2,485.9 Z" fill="#7b70d6"/><path d="M66.6,484.9 L65.8,488.3 L69.4,486.3 Z" fill="#7b70d6" stroke="#fff" stroke-width="0.6"/><circle cx="69.2" cy="482.1" r="4.7" fill="#7b70d6" stroke="#fff" stroke-width="0.7"/><path d="M66.9,484.7 L66.2,487.7 L69.2,485.9 Z" fill="#7b70d6"/><path d="M62.6,484.9 L61.8,488.3 L65.4,486.3 Z" fill="#7b70d6" stroke="#fff" stroke-width="0.6"/><circle cx="65.2" cy="482.1" r="4.7" fill="#7b70d6" stroke="#fff" stroke-width="0.7"/><path d="M62.9,484.7 L62.2,487.7 L65.2,485.9 Z" fill="#7b70d6"/><rect x="63.8" y="482.3" width="2.8" height="1.7" rx="0.4" fill="#fff"/>
</svg>
<div class="yl" style="top:476.5px;left:19.5px">0</div><div class="yl" style="top:443.9px;left:19.0px">2 500</div><div class="yl" style="top:411.9px;left:19.0px">5 000</div><div class="yl" style="top:379.9px;left:19.0px">7 500</div><div class="yl" style="top:347.9px;left:19.0px">10 000</div><div class="yl" style="top:315.9px;left:19.0px">12 500</div><div class="yl" style="top:283.9px;left:19.0px">15 000</div><div class="yl" style="top:251.9px;left:19.0px">17 500</div>
<div class="xl" style="left:38.0px">Мар 19</div><div class="xl" style="left:161.0px">Янв 20</div><div class="xl" style="left:283.9px">Ноя 20</div><div class="xl" style="left:406.9px">Сен 21</div><div class="xl" style="left:529.8px">Июл 22</div><div class="xl" style="left:652.8px">Май 23</div><div class="xl" style="left:775.7px">Мар 24</div>

<!-- tooltip -->
<div class="tt">
 <div class="d" style="top:7px">Апрель 2024</div>
 <i class="dot" style="top:25.5px;background:#f5c518"></i><div class="r" style="top:22px">Переходы из поисковых систем</div><div class="v" style="top:22px">16 639</div>
 <i class="dot" style="top:39px;background:#b23cc4"></i><div class="r" style="top:35.5px">Внутренние переходы</div><div class="v" style="top:35.5px">0</div>
 <i class="dot" style="top:52px;background:#e5321e"></i><div class="r" style="top:48.5px">Прямые заходы</div><div class="v" style="top:48.5px">0</div>
 <i class="dot" style="top:65.5px;background:#3aa6e0"></i><div class="r" style="top:62px">Переходы по ссылкам на сайтах</div><div class="v" style="top:62px">0</div>
 <i class="dot" style="top:78.5px;background:#6cc040"></i><div class="r" style="top:75px">Переходы по рекламе</div><div class="v" style="top:75px">0</div>
 <div class="a" style="left:0;top:95px;width:185px;height:1px;background:#404040"></div>
 <div class="d" style="top:103px">27 апреля 2024</div>
 <svg class="a" style="left:8px;top:117px" width="8" height="8" viewBox="0 0 8 8"><rect x="0" y="0" width="8" height="8" rx="2" fill="#e0141e"/><rect x="2" y="2.8" width="4" height="2.2" fill="#fff"/></svg>
 <div class="r" style="left:19.5px;top:116.8px">Перенос</div>
 <div class="d" style="top:134px">29 апреля 2024</div>
 <svg class="a" style="left:8px;top:148.5px" width="8" height="8" viewBox="0 0 8 8"><rect x="0" y="0" width="8" height="8" rx="2" fill="#e0141e"/><rect x="2" y="2.8" width="4" height="2.2" fill="#fff"/></svg>
 <div class="r" style="left:19.5px;top:148.2px">Перенос выходного</div>
 <div class="d" style="top:165px">30 апреля 2024</div>
 <svg class="a" style="left:8px;top:180px" width="8" height="8" viewBox="0 0 8 8"><rect x="0" y="0" width="8" height="8" rx="2" fill="#e0141e"/><rect x="2" y="2.8" width="4" height="2.2" fill="#fff"/></svg>
 <div class="r" style="left:19.5px;top:179.7px">Перенос выходного</div>
</div>

<!-- legend -->
<div class="lg" style="top:336.5px"><i></i><span>Переходы по рекламе</span></div>
<div class="lg t" style="top:354px;color:#1a1a1a"><i style="background:#fbbd1e;border-color:#fbbd1e;left:-0.5px;top:1px;width:9px;height:9px;border-radius:2px"></i><svg style="position:absolute;left:1px;top:2.5px" width="6" height="6" viewBox="0 0 6 6"><path d="M1,3 L2.6,4.6 L5,1.2" fill="none" stroke="#fff" stroke-width="1.1"/></svg><span>Переходы из поисковых систем</span></div>
<div class="lg" style="top:371px"><i></i><span>Переходы по ссылкам на сайтах</span></div>
<div class="lg" style="top:388px"><i></i><span>Прямые заходы</span></div>
<div class="lg" style="top:406px"><i></i><span>Внутренние переходы</span></div>

</body></html>
